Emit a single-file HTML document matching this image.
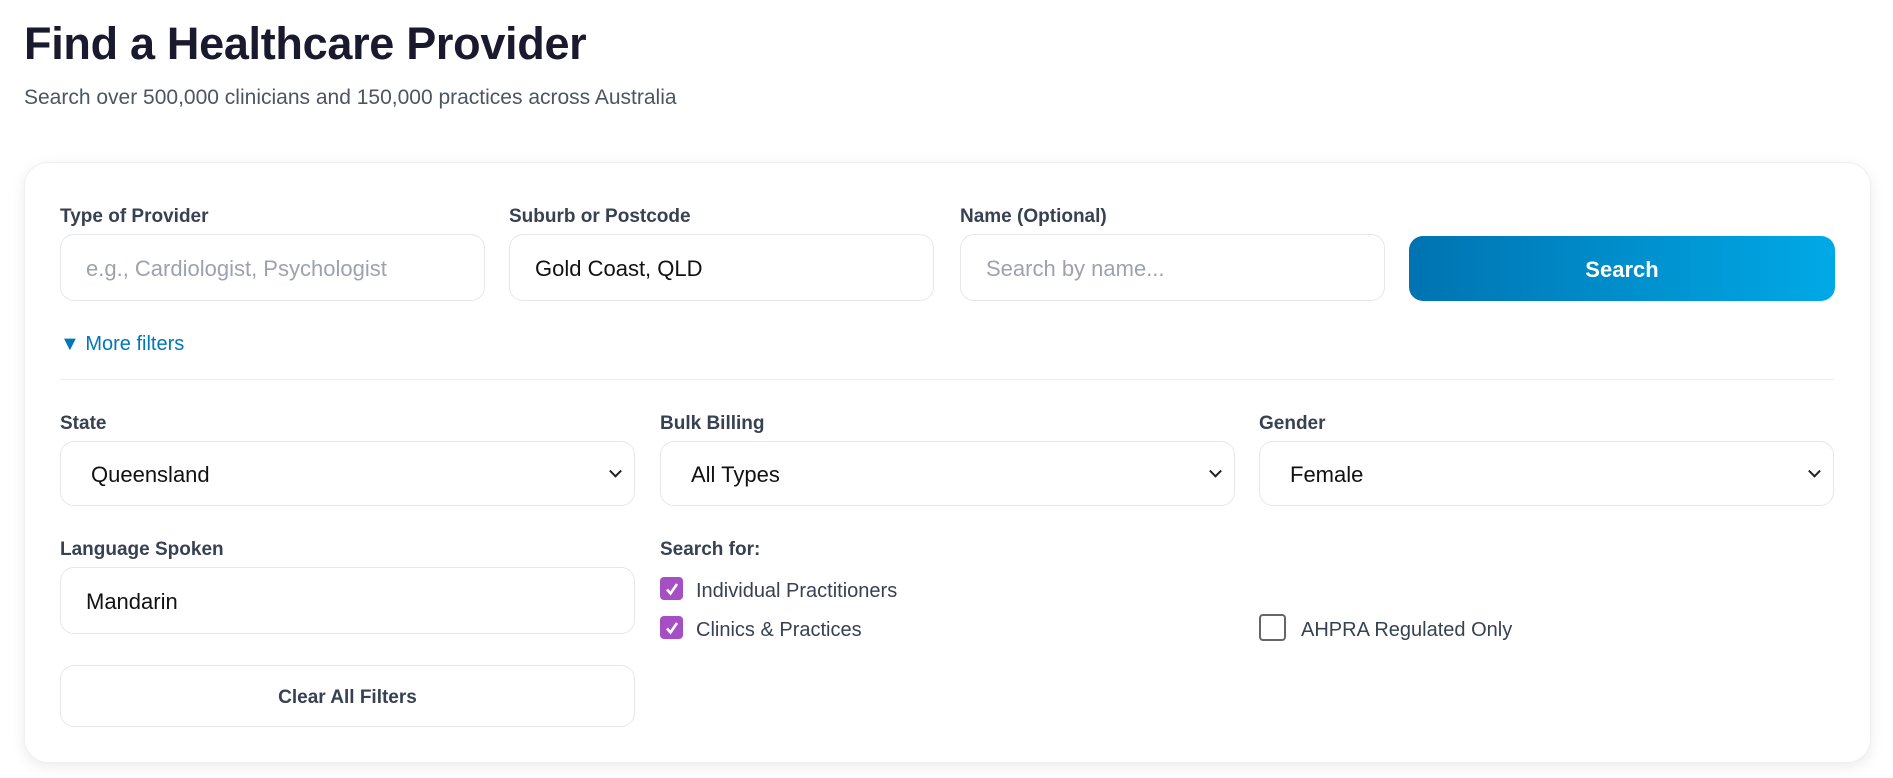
<!DOCTYPE html>
<html><head><meta charset="utf-8"><style>
*{box-sizing:border-box;margin:0;padding:0}
body{width:1893px;height:778px;background:#fff;font-family:"Liberation Sans",sans-serif;position:relative;overflow:hidden;color:#1f2937}
.abs{position:absolute}
h1{position:absolute;left:24px;top:18px;font-size:45px;font-weight:bold;color:#1a1a2e;letter-spacing:-0.3px}
.sub{left:24px;top:86px;font-size:21px;color:#4b5563}
.card{left:24px;top:162px;width:1847px;height:601px;border:1px solid #f0f0f0;border-radius:24px;box-shadow:0 4px 14px rgba(0,0,0,0.08);background:#fff}
.lbl{font-size:19px;font-weight:bold;color:#374151}
.in{border:1px solid #e5e7eb;border-radius:14px;background:#fff;font-size:22px;color:#111;display:flex;align-items:center;padding-left:25px;padding-top:3px}
.ph{color:#9ca3af}
.sel{padding-left:30px}
.chev{position:absolute;right:14px;top:50%;margin-top:-3px;width:9px;height:9px;border-right:2px solid #222;border-bottom:2px solid #222;transform:rotate(45deg) translate(-3px,-3px)}
.btn{left:1409px;top:236px;width:426px;height:65px;border-radius:14px;background:linear-gradient(90deg,#0073b1,#00a9e6);color:#fff;font-size:22px;font-weight:bold;display:flex;align-items:center;justify-content:center;padding-top:2px}
.cb{width:23px;height:23px;border-radius:4px;background:#a64fc4;display:flex;align-items:center;justify-content:center}
.cbe{width:27px;height:27px;border-radius:4px;border:2px solid #666;background:#fff}
.ct{font-size:20px;color:#374151}
</style></head><body>
<h1>Find a Healthcare Provider</h1>
<div class="abs sub">Search over 500,000 clinicians and 150,000 practices across Australia</div>
<div class="abs card"></div>

<div class="abs lbl" style="left:60px;top:206px">Type of Provider</div>
<div class="abs lbl" style="left:509px;top:206px">Suburb or Postcode</div>
<div class="abs lbl" style="left:960px;top:206px">Name (Optional)</div>
<div class="abs in" style="left:60px;top:234px;width:425px;height:67px"><span class="ph">e.g., Cardiologist, Psychologist</span></div>
<div class="abs in" style="left:509px;top:234px;width:425px;height:67px">Gold Coast, QLD</div>
<div class="abs in" style="left:960px;top:234px;width:425px;height:67px"><span class="ph">Search by name...</span></div>
<div class="abs btn">Search</div>

<div class="abs" style="left:60px;top:333px;font-size:20px;color:#0077b6">▼ More filters</div>
<div class="abs" style="left:60px;top:379px;width:1775px;height:1px;background:#eceef1"></div>

<div class="abs lbl" style="left:60px;top:413px">State</div>
<div class="abs lbl" style="left:660px;top:413px">Bulk Billing</div>
<div class="abs lbl" style="left:1259px;top:413px">Gender</div>
<div class="abs in sel" style="left:60px;top:441px;width:575px;height:65px">Queensland<span class="chev"></span></div>
<div class="abs in sel" style="left:660px;top:441px;width:575px;height:65px">All Types<span class="chev"></span></div>
<div class="abs in sel" style="left:1259px;top:441px;width:575px;height:65px">Female<span class="chev"></span></div>

<div class="abs lbl" style="left:60px;top:539px">Language Spoken</div>
<div class="abs in" style="left:60px;top:567px;width:575px;height:67px">Mandarin</div>

<div class="abs lbl" style="left:660px;top:539px">Search for:</div>
<div class="abs cb" style="left:660px;top:577px"><svg width="16" height="16" viewBox="0 0 16 16"><path d="M3 8.5l3.5 4L13 3" stroke="#fff" stroke-width="2.6" fill="none"/></svg></div>
<div class="abs ct" style="left:696px;top:580px">Individual Practitioners</div>
<div class="abs cb" style="left:660px;top:616px"><svg width="16" height="16" viewBox="0 0 16 16"><path d="M3 8.5l3.5 4L13 3" stroke="#fff" stroke-width="2.6" fill="none"/></svg></div>
<div class="abs ct" style="left:696px;top:619px">Clinics &amp; Practices</div>
<div class="abs cbe" style="left:1259px;top:614px"></div>
<div class="abs ct" style="left:1301px;top:619px">AHPRA Regulated Only</div>

<div class="abs in" style="left:60px;top:665px;width:575px;height:62px;justify-content:center;padding:3px 0 0 0;font-size:19px;font-weight:bold;color:#374151">Clear All Filters</div>
</body></html>
